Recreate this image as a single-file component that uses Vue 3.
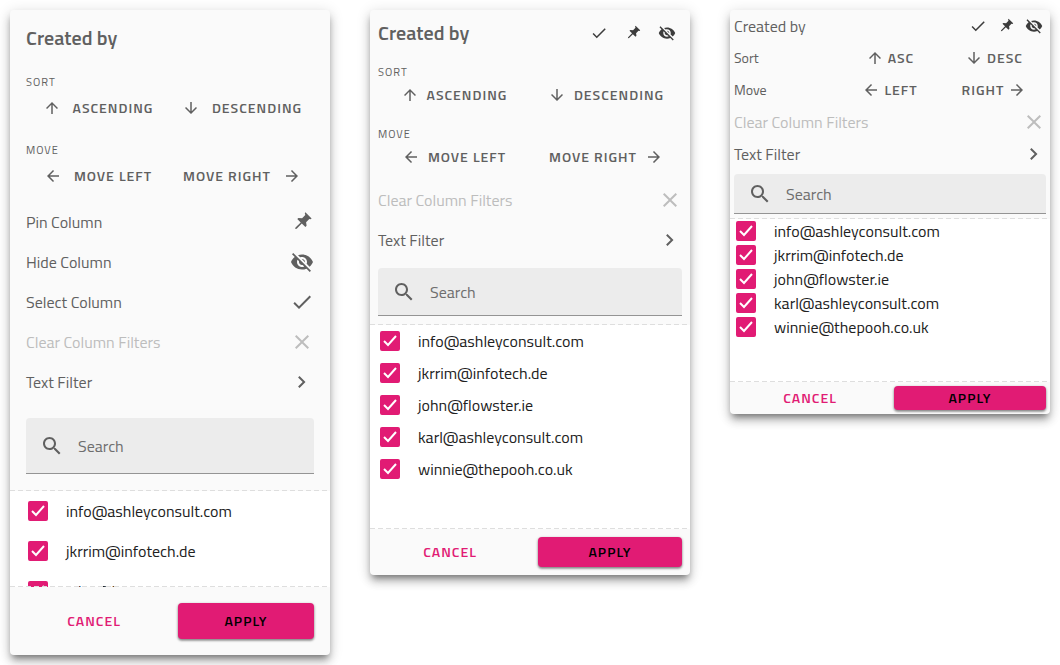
<script setup>
import { reactive } from 'vue'

const icons = {
  up: 'M4 12l1.41 1.41L11 7.83V20h2V7.83l5.58 5.59L20 12l-8-8-8 8z',
  down: 'M20 12l-1.41-1.41L13 16.17V4h-2v12.17l-5.58-5.59L4 12l8 8 8-8z',
  left: 'M20 11H7.83l5.59-5.59L12 4l-8 8 8 8 1.41-1.41L7.83 13H20v-2z',
  right: 'M12 4l-1.41 1.41L16.17 11H4v2h12.17l-5.58 5.59L12 20l8-8z',
  check: 'M9 16.17L4.83 12l-1.42 1.41L9 19 21 7l-1.41-1.41z',
  close: 'M19 6.41L17.59 5 12 10.59 6.41 5 5 6.41 10.59 12 5 17.59 6.41 19 12 13.41 17.59 19 19 17.59 13.41 12z',
  chevron: 'M9.5 6L8.09 7.41 12.67 12l-4.58 4.59L9.5 18l6-6z',
  search: 'M15.5 14h-.79l-.28-.27C15.41 12.59 16 11.11 16 9.5 16 5.91 13.09 3 9.5 3S3 5.91 3 9.5 5.91 16 9.5 16c1.61 0 3.09-.59 4.23-1.57l.27.28v.79l5 4.99L20.49 19l-4.99-5zm-6 0C7.01 14 5 11.99 5 9.5S7.01 5 9.5 5 14 7.01 14 9.5 11.99 14 9.5 14z',
  pin: 'M15.4 2.2l6.2 6.2-.9.8-1.4-.2-3.2 3.2.5 3.6-1.2 1.1-3.6-3.4-5.1 5.2-1.5.3.3-1.5 5.2-5.1-3.4-3.3 1.1-1.1 3.7.3 3.2-3.2-.5-1.8z',
  eye: 'M12 7c2.76 0 5 2.24 5 5 0 .65-.13 1.26-.36 1.83l2.92 2.92c1.51-1.26 2.7-2.89 3.43-4.75-1.73-4.39-6-7.5-11-7.5-1.4 0-2.74.25-3.98.7l2.16 2.16C10.74 7.13 11.35 7 12 7zM2 4.27l2.28 2.28.46.46C3.08 8.3 1.78 10.02 1 12c1.73 4.39 6 7.5 11 7.5 1.55 0 3.03-.3 4.38-.84l.42.42L19.73 22 21 20.73 3.27 3 2 4.27zM7.53 9.8l1.55 1.55c-.05.21-.08.43-.08.65 0 1.66 1.34 3 3 3 .22 0 .44-.03.65-.08l1.55 1.55c-.67.33-1.41.53-2.2.53-2.76 0-5-2.24-5-5 0-.79.2-1.53.53-2.2zm4.31-.78l3.15 3.15.02-.16c0-1.66-1.34-3-3-3l-.17.01z',
}

const emails = [
  'info@ashleyconsult.com',
  'jkrrim@infotech.de',
  'john@flowster.ie',
  'karl@ashleyconsult.com',
  'winnie@thepooh.co.uk',
]
const entries = (count = emails.length) =>
  emails.slice(0, count).map((email) => ({ email, checked: true }))

const groups = (sort, move, labels) => [
  { label: sort, actions: [{ text: labels[0], icon: 'up' }, { text: labels[1], icon: 'down' }] },
  { label: move, actions: [{ text: labels[2], icon: 'left' }, { text: labels[3], icon: 'right', trailing: true }] },
]
const long = ['ASCENDING', 'DESCENDING', 'MOVE LEFT', 'MOVE RIGHT']
const short = ['ASC', 'DESC', 'LEFT', 'RIGHT']

const filterRows = [
  { text: 'Clear Column Filters', icon: 'close', disabled: true },
  { text: 'Text Filter', icon: 'chevron' },
]
const columnRows = [
  { text: 'Pin Column', icon: 'pin' },
  { text: 'Hide Column', icon: 'eye' },
  { text: 'Select Column', icon: 'check' },
]
const tools = [
  { name: 'Select column', icon: 'check' },
  { name: 'Pin column', icon: 'pin' },
  { name: 'Hide column', icon: 'eye' },
]

const panels = reactive([
  { size: 'comfortable', tools: [], groups: groups('SORT', 'MOVE', long), rows: [...columnRows, ...filterRows], entries: entries(3), query: '' },
  { size: 'cosy', tools, groups: groups('SORT', 'MOVE', long), rows: filterRows, entries: entries(), query: '' },
  { size: 'compact', tools, groups: groups('Sort', 'Move', short), rows: filterRows, entries: entries(), query: '' },
])
</script>

<template>
  <main class="page">
    <section v-for="panel in panels" :key="panel.size" class="panel" :class="panel.size">
      <div class="top">
        <header class="head">
          <h2 class="title">Created by</h2>
          <div v-if="panel.tools.length" class="tools">
            <button v-for="tool in panel.tools" :key="tool.icon" type="button" class="tool" :aria-label="tool.name">
              <svg class="icon small" viewBox="0 0 24 24"><path :d="icons[tool.icon]" /></svg>
            </button>
          </div>
        </header>

        <div v-for="group in panel.groups" :key="group.label" class="group">
          <span class="label">{{ group.label }}</span>
          <div class="actions">
            <button
              v-for="action in group.actions"
              :key="action.text"
              type="button"
              class="action"
              :class="{ trailing: action.trailing }"
            >
              <svg class="icon small" viewBox="0 0 24 24"><path :d="icons[action.icon]" /></svg>
              <span>{{ action.text }}</span>
            </button>
          </div>
        </div>

        <div class="rows">
          <button v-for="row in panel.rows" :key="row.text" type="button" class="row" :disabled="row.disabled">
            <span>{{ row.text }}</span>
            <svg class="icon" viewBox="0 0 24 24"><path :d="icons[row.icon]" /></svg>
          </button>
        </div>

        <label class="search">
          <svg class="icon" viewBox="0 0 24 24"><path :d="icons.search" /></svg>
          <input v-model="panel.query" type="text" placeholder="Search" aria-label="Search" />
        </label>
      </div>

      <div class="rule"></div>
      <div class="list">
        <label v-for="entry in panel.entries" :key="entry.email" class="entry">
          <span class="box">
            <input v-model="entry.checked" type="checkbox" />
            <svg v-if="entry.checked" viewBox="0 0 20 20"><path d="M4 10l4 4 8-9" /></svg>
          </span>
          <span>{{ entry.email }}</span>
        </label>
      </div>
      <div class="rule over"></div>

      <footer class="foot">
        <button type="button" class="cancel">CANCEL</button>
        <button type="button" class="apply">APPLY</button>
      </footer>
    </section>
  </main>
</template>

<style>
body {
  margin: 0;
  background: #fff;
}
</style>

<style scoped>
.page {
  display: grid;
  grid-template-columns: repeat(3, 1fr);
  align-items: start;
  gap: 40px;
  padding: 10px;
  font-family: "Titillium Web", Roboto, "Liberation Sans", sans-serif;
  font-size: 16px;
  line-height: 24px;
  color: #606060;
}

button,
input {
  margin: 0;
  padding: 0;
  border: 0;
  background: none;
  color: inherit;
  font: inherit;
}

button {
  cursor: pointer;
}

.panel {
  display: flex;
  flex-direction: column;
  border-radius: 4px;
  background: #fafafa;
  box-shadow:
    0 5px 6px -3px rgba(0, 0, 0, 0.4),
    0 7px 10px 0 rgba(0, 0, 0, 0.2),
    0 2px 14px 1px rgba(0, 0, 0, 0.12);
}

.comfortable {
  --pad: 16px;
  --button: 36px;
  --row: 40px;
  --entry: 40px;
  --search: 56px;
  --list: 96px;
  --icon-gap: 12px;
  --foot-gap: 16px;
}

.cosy {
  --pad: 8px;
  --button: 30px;
  --row: 40px;
  --entry: 32px;
  --search: 48px;
  --list: 204px;
  --icon-gap: 8px;
  --foot-gap: 16px;
}

.compact {
  --pad: 4px;
  --button: 24px;
  --row: 32px;
  --entry: 24px;
  --search: 40px;
  --list: 163px;
  --icon-gap: 4px;
  --foot-gap: 8px;
}

.top {
  padding: var(--pad);
}

.compact .top {
  padding-top: 0;
}

.icon {
  flex: none;
  width: 24px;
  height: 24px;
  fill: currentColor;
}

.icon.small {
  width: 18px;
  height: 18px;
}

.head {
  display: flex;
  align-items: center;
  justify-content: space-between;
}

.cosy .head {
  height: 30px;
}

.compact .head {
  height: 32px;
}

.title {
  margin: 0;
  font-size: 20px;
  font-weight: 600;
}

.compact .title {
  font-size: 16px;
  font-weight: 400;
}

.tools {
  display: flex;
  gap: 4px;
  color: #3c3c3c;
}

.tool {
  display: grid;
  place-items: center;
  width: var(--button);
  height: var(--button);
}

.group {
  margin-top: 16px;
}

.comfortable .head {
  margin-bottom: 24px;
}

.comfortable .head + .group {
  margin-top: 0;
}

.label {
  display: block;
  font-size: 11px;
  line-height: 16px;
  letter-spacing: 1px;
}

.actions {
  display: grid;
  grid-template-columns: 1fr 1fr;
}

.action {
  display: flex;
  align-items: center;
  justify-content: center;
  gap: var(--icon-gap);
  height: var(--button);
  font-size: 14px;
  font-weight: 600;
  letter-spacing: 1px;
  white-space: nowrap;
}

.action.trailing {
  flex-direction: row-reverse;
}

.compact .group {
  display: grid;
  grid-template-columns: 1fr 2fr;
  align-items: center;
  height: 32px;
  margin: 0;
}

.compact .label {
  font-size: 14px;
  letter-spacing: 0;
}

.rows {
  margin-top: 8px;
}

.compact .rows {
  margin-top: 0;
}

.row {
  display: flex;
  align-items: center;
  justify-content: space-between;
  width: 100%;
  height: var(--row);
  text-align: left;
}

.row:disabled {
  color: #bdbdbd;
  cursor: default;
}

.search {
  display: flex;
  align-items: center;
  gap: 14px;
  box-sizing: border-box;
  height: var(--search);
  margin-top: var(--pad);
  padding: 0 14px;
  border-bottom: 1px solid #949494;
  border-radius: 4px 4px 0 0;
  background: #ececec;
}

.search input {
  flex: 1;
  min-width: 0;
  outline: 0;
}

.search input::placeholder {
  color: #6e6e6e;
  opacity: 1;
}

.rule {
  height: 1px;
  background: repeating-linear-gradient(90deg, #dedede 0 5px, transparent 5px 8px);
}

.rule.over {
  z-index: 1;
  margin-top: -1px;
}

.list {
  height: var(--list);
  overflow: hidden;
  background: #fff;
}

.entry {
  display: flex;
  align-items: center;
  gap: 18px;
  height: var(--entry);
  padding: 0 calc(var(--pad) + 2px);
  color: #212121;
}

.box {
  display: grid;
  width: 20px;
  height: 20px;
}

.box > * {
  grid-area: 1 / 1;
  width: 20px;
  height: 20px;
}

.box input {
  box-sizing: border-box;
  appearance: none;
  border: 2px solid #757575;
  border-radius: 2px;
}

.box input:checked {
  border-color: #e11b74;
  background: #e11b74;
}

.box svg {
  fill: none;
  stroke: #fff;
  stroke-width: 2;
  pointer-events: none;
}

.foot {
  display: grid;
  grid-template-columns: 1fr 1fr;
  gap: var(--foot-gap);
  padding: var(--pad);
}

.foot button {
  height: var(--button);
  border-radius: 4px;
  font-size: 14px;
  font-weight: 600;
  letter-spacing: 1px;
}

.cancel {
  color: #e11b74;
}

.foot .apply {
  background: #e11b74;
  color: #000;
  box-shadow:
    0 1px 3px rgba(0, 0, 0, 0.4),
    0 2px 2px rgba(0, 0, 0, 0.2);
}
</style>
